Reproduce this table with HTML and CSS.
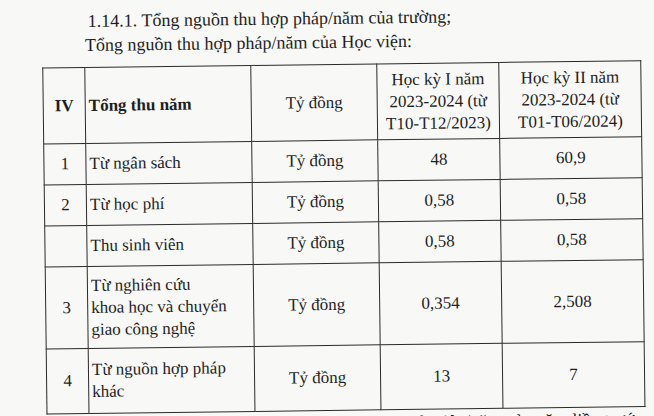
FILE: index.html
```html
<!DOCTYPE html>
<html lang="vi">
<head>
<meta charset="utf-8">
<link rel="stylesheet" href="styles.css">
</head>
<body>
<div class="page">
  <p class="line first">1.14.1. Tổng nguồn thu hợp pháp/năm của trường;</p>
  <p class="line second">Tổng nguồn thu hợp pháp/năm của Học viện:</p>
  <table class="grid">
    <colgroup>
      <col class="c1"><col class="c2"><col class="c3"><col class="c4"><col class="c5">
    </colgroup>
    <tr class="head">
      <th class="num">IV</th>
      <th class="label">Tổng thu năm</th>
      <td class="mid">Tỷ đồng</td>
      <td class="mid">Học kỳ I năm<br>2023-2024 (từ<br>T10-T12/2023)</td>
      <td class="mid">Học kỳ II năm<br>2023-2024 (từ<br>T01-T06/2024)</td>
    </tr>
    <tr class="r1">
      <td class="num">1</td><td class="label">Từ ngân sách</td><td class="mid">Tỷ đồng</td><td class="mid">48</td><td class="mid">60,9</td>
    </tr>
    <tr class="r1">
      <td class="num">2</td><td class="label">Từ học phí</td><td class="mid">Tỷ đồng</td><td class="mid">0,58</td><td class="mid">0,58</td>
    </tr>
    <tr class="r1">
      <td class="num"></td><td class="label">Thu sinh viên</td><td class="mid">Tỷ đồng</td><td class="mid">0,58</td><td class="mid">0,58</td>
    </tr>
    <tr class="r3">
      <td class="num">3</td><td class="label">Từ nghiên cứu<br>khoa học và chuyển<br>giao công nghệ</td><td class="mid">Tỷ đồng</td><td class="mid">0,354</td><td class="mid">2,508</td>
    </tr>
    <tr class="r4">
      <td class="num">4</td><td class="label">Từ nguồn hợp pháp<br>khác</td><td class="mid">Tỷ đồng</td><td class="mid">13</td><td class="mid">7</td>
    </tr>
  </table>
  <p class="line after">1.14.2. Tổng chi phí đào tạo trung bình 1 sinh viên/năm của năm liền trước</p>
</div>
</body>
</html>
```

FILE: styles.css
```css
html, body {
  margin: 0;
  padding: 0;
  background: #f8f8f7;
}
body {
  width: 654px;
  height: 416px;
  overflow: hidden;
  font-family: "Liberation Serif", Tinos, "Times New Roman", "DejaVu Serif", serif;
  font-size: 17px;
  color: #1e1e1e;
}
.page {
  width: 654px;
  height: 416px;
  transform: rotate(-0.7deg);
  transform-origin: 327px 208px;
}
.line {
  margin: 0;
  line-height: 24px;
  font-size: 18px;
  white-space: nowrap;
}
.first {
  padding: 6px 0 0 90px;
}
.second {
  padding-left: 87px;
}
.grid {
  margin: 10px 0 0 44px;
  border-collapse: collapse;
  table-layout: fixed;
  width: 598px;
  font-family: inherit;
  font-size: 17px;
}
.c1 { width: 42px; }
.c2 { width: 166px; }
.c3 { width: 126px; }
.c4 { width: 122px; }
.c5 { width: 142px; }
.grid th, .grid td {
  border: 1.3px solid #2a2a2a;
  padding: 0;
  line-height: 22px;
  vertical-align: middle;
  font-family: inherit;
}
.grid th { font-weight: bold; }
.num { text-align: center; }
.label { text-align: left; padding-left: 3px !important; }
.mid { text-align: center; }
.head { height: 76px; }
.r1 { height: 41px; }
.r3 { height: 82px; }
.r4 { height: 65px; }
.after {
  width: 548px;
  margin: 3px 0 0 92px;
  line-height: 18px;
  white-space: normal;
  text-align: justify;
  text-align-last: justify;
}
```
